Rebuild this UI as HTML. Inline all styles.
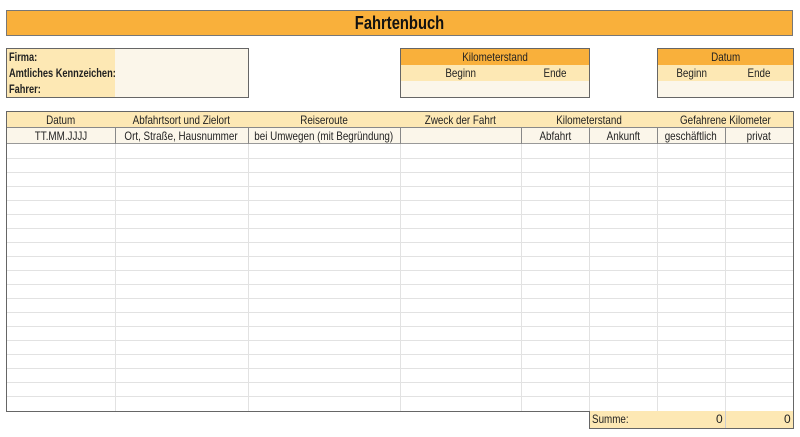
<!DOCTYPE html>
<html><head><meta charset="utf-8"><style>
*{margin:0;padding:0;box-sizing:border-box}
body{width:800px;height:437px;background:#fff;position:relative;font-family:"Liberation Sans",Arial,sans-serif;font-size:12px;color:#222;overflow:hidden}
.a{position:absolute}
.c{position:absolute;display:flex;align-items:center;justify-content:center;white-space:nowrap}
.c span,.s{display:inline-block;transform:scaleX(0.82)}
.s{transform-origin:left center}
</style></head><body>
<div class="c" style="left:6px;top:10px;width:787px;height:26px;background:#F9B03B;border:1px solid #777;font-weight:bold;font-size:18px;color:#111"><span>Fahrtenbuch</span></div>

<div class="a" style="left:6px;top:48px;width:243px;height:50px;border:1px solid #666;background:#FBF6EA"></div>
<div class="a" style="left:7px;top:49px;width:108px;height:48px;background:#FDE8B4"></div>
<div class="a s" style="left:9px;top:49px;font-weight:bold;line-height:16px;white-space:nowrap;transform:scaleX(0.77)">Firma:<br>Amtliches Kennzeichen:<br>Fahrer:</div>

<div class="a" style="left:400px;top:48px;width:190px;height:50px;border:1px solid #666;background:#FBF6EA"></div>
<div class="c" style="left:401px;top:49px;width:188px;height:16px;background:#F9B03B"><span>Kilometerstand</span></div>
<div class="a" style="left:401px;top:65px;width:188px;height:16px;background:#FDE8B4"></div>
<div class="c" style="left:401px;top:65px;width:120px;height:16px"><span>Beginn</span></div>
<div class="c" style="left:521px;top:65px;width:68px;height:16px"><span>Ende</span></div>

<div class="a" style="left:657px;top:48px;width:137px;height:50px;border:1px solid #666;background:#FBF6EA"></div>
<div class="c" style="left:658px;top:49px;width:135px;height:16px;background:#F9B03B"><span>Datum</span></div>
<div class="a" style="left:658px;top:65px;width:135px;height:16px;background:#FDE8B4"></div>
<div class="c" style="left:658px;top:65px;width:67px;height:16px"><span>Beginn</span></div>
<div class="c" style="left:725px;top:65px;width:68px;height:16px"><span>Ende</span></div>

<div class="a" style="left:6px;top:111px;width:788px;height:301px;border:1px solid #666;background:#fff"></div>
<div class="a" style="left:7px;top:112px;width:786px;height:16px;background:#FDE8B4;border-bottom:1px solid #888"></div>
<div class="a" style="left:7px;top:128px;width:786px;height:16px;background:#FBF6EA;border-bottom:1px solid #999"></div>
<div class="c" style="left:6px;top:112px;width:109px;height:16px"><span>Datum</span></div>
<div class="c" style="left:115px;top:112px;width:133px;height:16px"><span>Abfahrtsort und Zielort</span></div>
<div class="c" style="left:248px;top:112px;width:152px;height:16px"><span>Reiseroute</span></div>
<div class="c" style="left:400px;top:112px;width:121px;height:16px"><span>Zweck der Fahrt</span></div>
<div class="c" style="left:521px;top:112px;width:136px;height:16px"><span>Kilometerstand</span></div>
<div class="c" style="left:657px;top:112px;width:136px;height:16px"><span>Gefahrene Kilometer</span></div>
<div class="c" style="left:6px;top:128px;width:109px;height:16px"><span>TT.MM.JJJJ</span></div>
<div class="c" style="left:115px;top:128px;width:133px;height:16px"><span>Ort, Straße, Hausnummer</span></div>
<div class="c" style="left:248px;top:128px;width:152px;height:16px"><span>bei Umwegen (mit Begründung)</span></div>
<div class="c" style="left:521px;top:128px;width:68px;height:16px"><span>Abfahrt</span></div>
<div class="c" style="left:589px;top:128px;width:68px;height:16px"><span>Ankunft</span></div>
<div class="c" style="left:657px;top:128px;width:68px;height:16px"><span>geschäftlich</span></div>
<div class="c" style="left:725px;top:128px;width:68px;height:16px"><span>privat</span></div>
<svg class="a" style="left:0;top:0" width="800" height="437">
<g stroke="#888" stroke-width="1">
<line x1="115.5" y1="128" x2="115.5" y2="144"/><line x1="248.5" y1="128" x2="248.5" y2="144"/><line x1="400.5" y1="128" x2="400.5" y2="144"/><line x1="521.5" y1="128" x2="521.5" y2="144"/><line x1="589.5" y1="128" x2="589.5" y2="144"/><line x1="657.5" y1="128" x2="657.5" y2="144"/><line x1="725.5" y1="128" x2="725.5" y2="144"/>
</g>
<g stroke="#e2e2e2" stroke-width="1">
<line x1="115.5" y1="144" x2="115.5" y2="411"/><line x1="248.5" y1="144" x2="248.5" y2="411"/><line x1="400.5" y1="144" x2="400.5" y2="411"/><line x1="521.5" y1="144" x2="521.5" y2="411"/><line x1="589.5" y1="144" x2="589.5" y2="411"/><line x1="657.5" y1="144" x2="657.5" y2="411"/><line x1="725.5" y1="144" x2="725.5" y2="411"/>
<line x1="7" y1="158.5" x2="793" y2="158.5"/><line x1="7" y1="172.5" x2="793" y2="172.5"/><line x1="7" y1="186.5" x2="793" y2="186.5"/><line x1="7" y1="200.5" x2="793" y2="200.5"/><line x1="7" y1="214.5" x2="793" y2="214.5"/><line x1="7" y1="228.5" x2="793" y2="228.5"/><line x1="7" y1="242.5" x2="793" y2="242.5"/><line x1="7" y1="256.5" x2="793" y2="256.5"/><line x1="7" y1="270.5" x2="793" y2="270.5"/><line x1="7" y1="284.5" x2="793" y2="284.5"/><line x1="7" y1="298.5" x2="793" y2="298.5"/><line x1="7" y1="312.5" x2="793" y2="312.5"/><line x1="7" y1="326.5" x2="793" y2="326.5"/><line x1="7" y1="340.5" x2="793" y2="340.5"/><line x1="7" y1="354.5" x2="793" y2="354.5"/><line x1="7" y1="368.5" x2="793" y2="368.5"/><line x1="7" y1="382.5" x2="793" y2="382.5"/><line x1="7" y1="396.5" x2="793" y2="396.5"/>
</g></svg>
<div class="a" style="left:589px;top:411px;width:205px;height:18px;background:#FDE8B4;border:1px solid #666;border-top:none"></div>
<div class="a" style="left:725px;top:411px;width:1px;height:17px;background:#ccc"></div>
<div class="a s" style="left:592px;top:412px">Summe:</div>
<div class="a" style="left:716px;top:412px">0</div>
<div class="a" style="left:784px;top:412px">0</div>
</body></html>
